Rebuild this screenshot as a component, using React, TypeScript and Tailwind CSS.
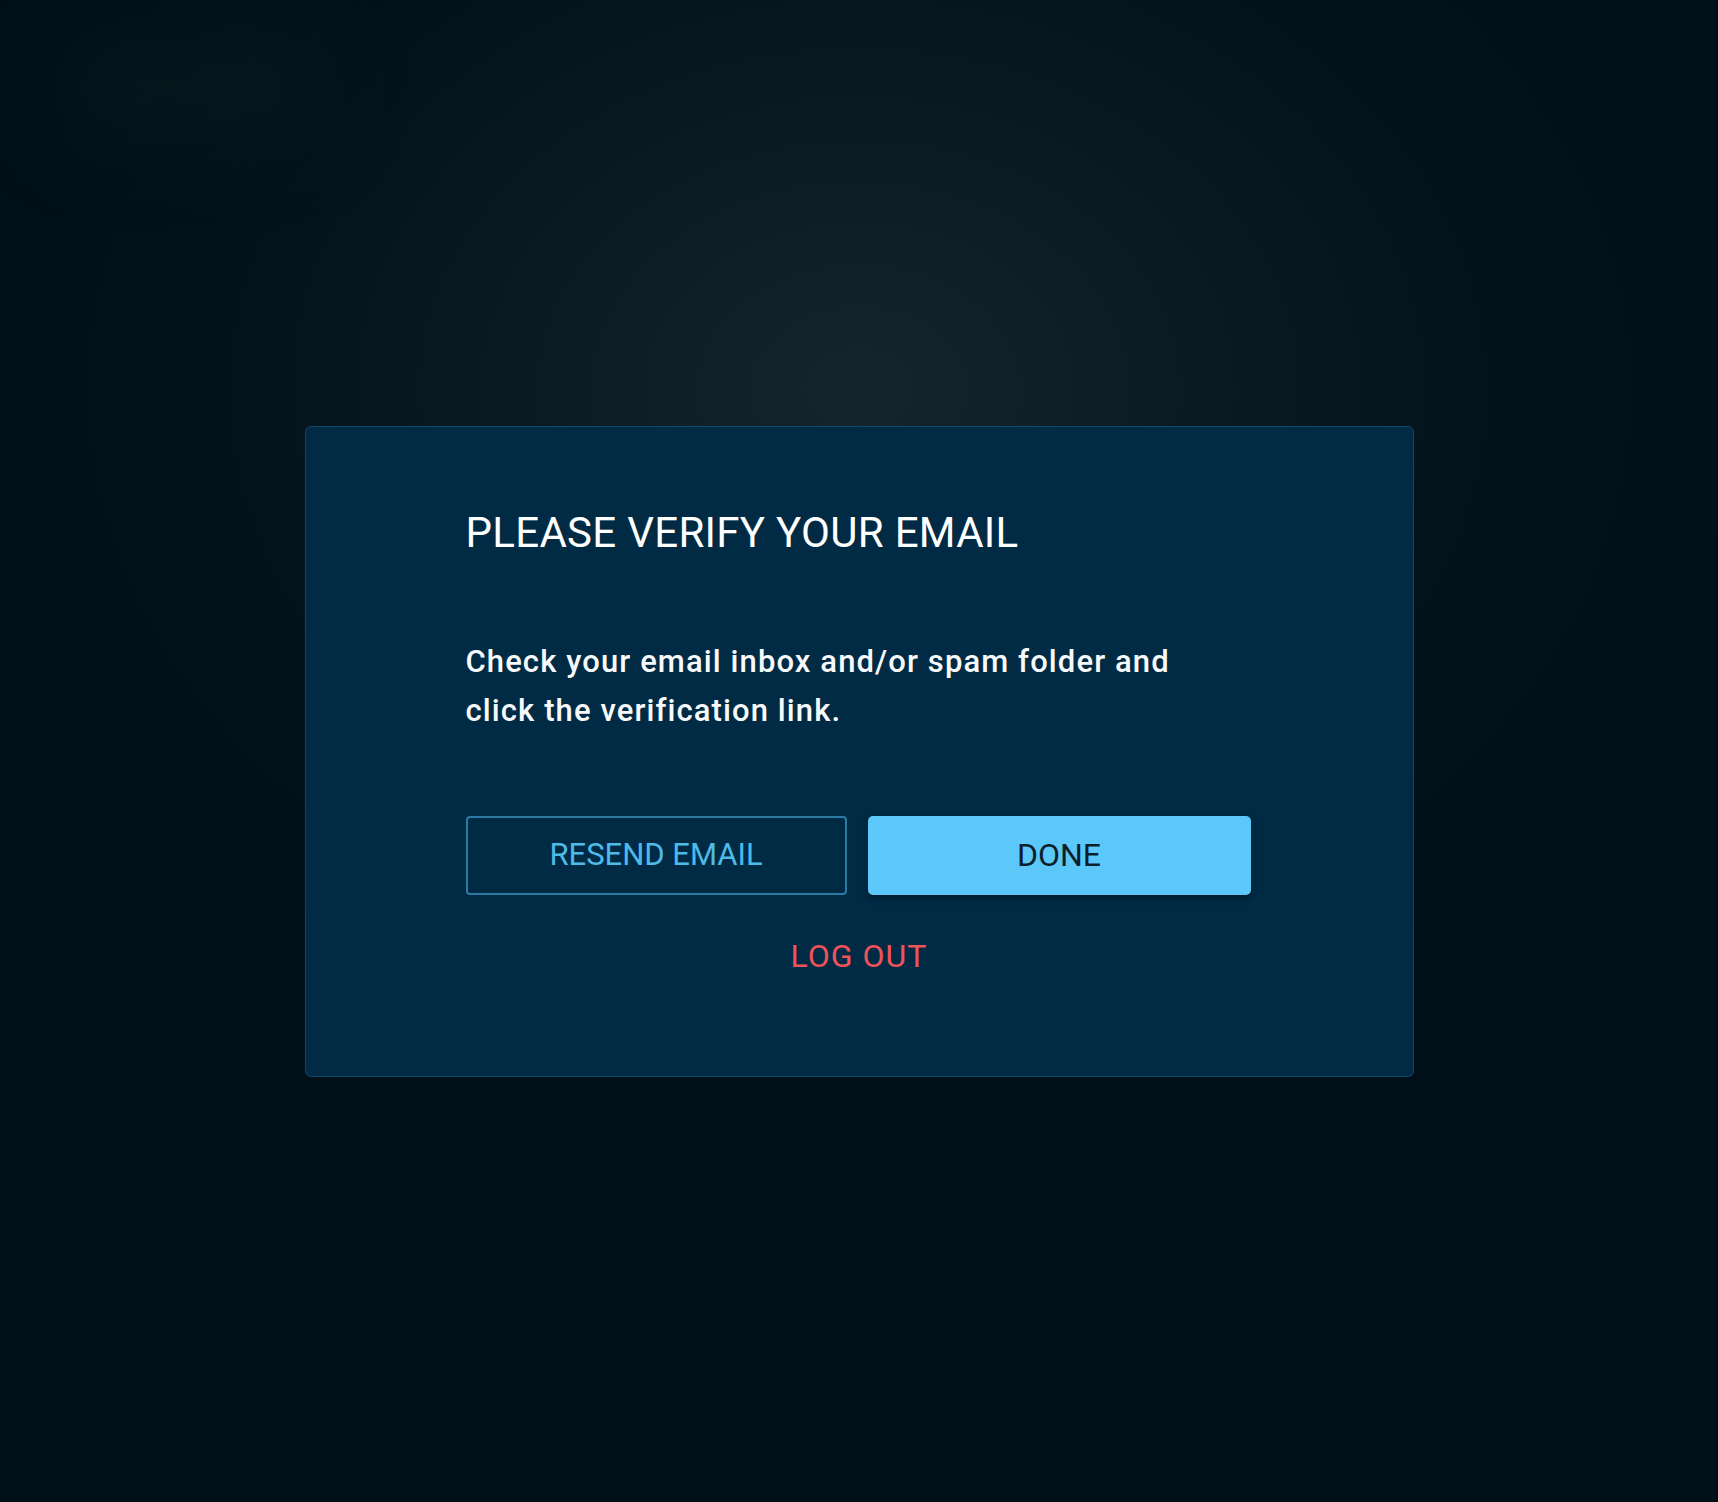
export default function App() {
    return (
        <div className="relative flex h-screen w-full items-center justify-center overflow-hidden bg-[radial-gradient(ellipse_900px_700px_at_50%_26%,#15252d_0%,#0a1a23_40%,#03121b_70%,#010f18_100%)] font-['Roboto','Liberation_Sans',sans-serif]">
            {/* faint background shapes */}
            <div className="pointer-events-none absolute left-[60px] top-[30px] h-[110px] w-[260px] rounded-3xl bg-[#0b1c22] opacity-50 blur-2xl" />

            {/* Card */}
            <div className="relative w-[1109px] rounded-md border border-[#0f4768] bg-[#012b44] pb-[100px] pl-[160px] pr-[162px] pt-[81px]">
                <h1 className="text-[42px] font-normal leading-[50px] tracking-[0.3px] text-white">
                    PLEASE VERIFY YOUR EMAIL
                </h1>

                <p className="mt-[79px] max-w-[740px] text-[31px] font-medium leading-[49px] tracking-[1.1px] text-[#f7f9fa]">
                    Check your email inbox and/or spam folder and click the
                    verification link.
                </p>

                <div className="mt-[81px] flex gap-[21px]">
                    <button
                        type="button"
                        className="flex h-[79px] w-[382px] items-center justify-center rounded-[4px] border-2 border-[#2b7ba4] text-[31px] text-[#4fb9e8]"
                    >
                        RESEND EMAIL
                    </button>
                    <button
                        type="button"
                        className="flex h-[79px] w-[384px] items-center justify-center rounded-[5px] bg-[#5bc8f9] text-[32px] text-[#0c1f2b] shadow-[0_3px_6px_rgba(0,0,0,0.35)]"
                    >
                        DONE
                    </button>
                </div>

                <div className="mt-[41px] flex justify-center pl-[2px]">
                    <button
                        type="button"
                        className="text-[32px] leading-[40px] tracking-[1px] text-[#f0525a]"
                    >
                        LOG OUT
                    </button>
                </div>
            </div>
        </div>
    );
}
